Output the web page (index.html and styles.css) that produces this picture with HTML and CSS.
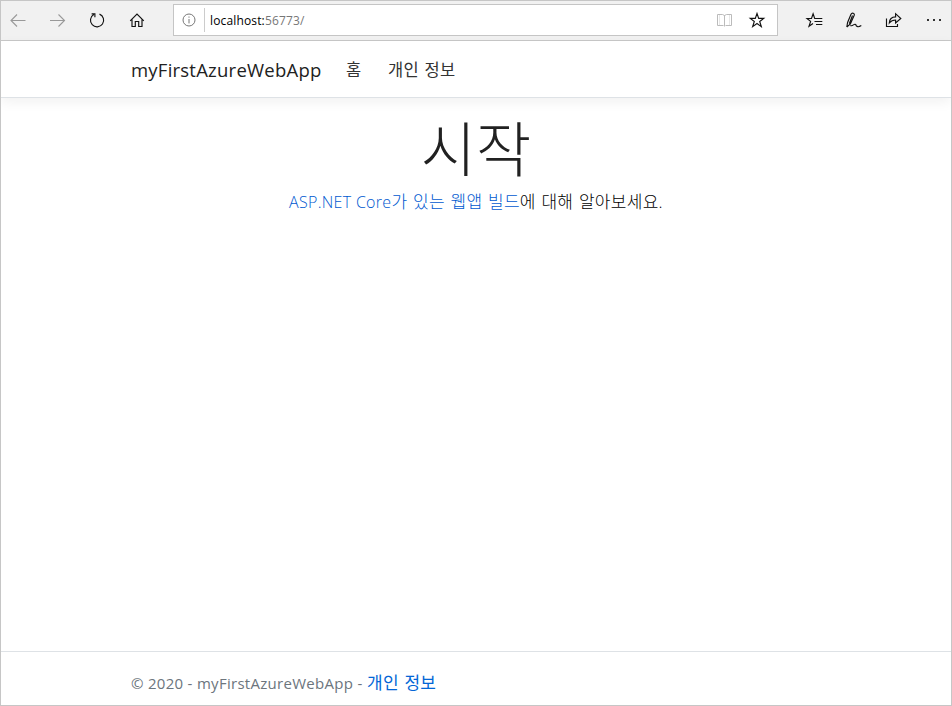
FILE: index.html
```html
<!DOCTYPE html>
<html lang="ko">
<head>
<meta charset="utf-8">
<title>myFirstAzureWebApp</title>
<link rel="stylesheet" href="styles.css">
</head>
<body>
<div class="window">
  <div class="toolbar">
    <div class="nav-buttons">
      <svg class="icon dim" viewBox="0 0 20 20"><path d="M18.5 10.5H4M10 4.5L4 10.5L10 16.5"/></svg>
      <svg class="icon dim" viewBox="0 0 20 20"><path d="M3 10.5H17.5M11.5 4.5L17.5 10.5L11.5 16.5"/></svg>
      <svg class="icon" viewBox="0 0 20 20"><path class="bold" d="M12.5 4.1A6.6 6.6 0 1 1 6.8 4.5M4.6 3.8H7.9V7.2"/></svg>
      <svg class="icon" viewBox="0 0 20 20"><path class="bold" d="M3.2 10.9L10 4L16.8 10.9M5 9.5V16.5H8.3V11.5H11.7V16.5H15V9.5"/></svg>
    </div>
    <div class="address">
      <svg class="info" viewBox="0 0 14 14"><circle cx="7" cy="7" r="6"/><path d="M7 6V10.4M7 3.5V4.7"/></svg>
      <span class="divider"></span>
      <span class="url">localhost:<span class="port">56773/</span></span>
      <svg class="icon book" viewBox="0 0 20 20"><path d="M10.5 5V16.5M9.5 15.5H3.5V4.5H8.5L10.5 5.5L12.5 4.5H17.5V15.5H11.5"/><path d="M5.5 4.5V15M15.5 4.5V15" opacity=".35"/></svg>
      <svg class="icon star" viewBox="0 0 20 20"><path class="bold" d="M10 3.5L11.7 8.4H16.7L12.7 11.5L14.3 16.6L10 13.5L5.7 16.6L7.3 11.5L3.3 8.4H8.3Z"/></svg>
    </div>
    <div class="tools">
      <svg class="icon" viewBox="0 0 20 20"><path class="bold" d="M12.8 8.5H10.7L9.1 3.8L7.5 8.5H3L6.6 11.4L5 16.3L9 13.5M11.5 8.5H18.3M10.5 11.5H18.3M12 14.5H18.3"/></svg>
      <svg class="icon" viewBox="0 0 20 20"><path class="bold" d="M2.8 17L3.6 12.5L7 4.3C8 2.2 11 3.2 10.2 5.3L6.4 14L2.8 17M8.5 5.5L5.3 13.7M6.3 15.5C8.9 17 9.9 13 11.7 14.5C12.3 17.1 14.5 17.3 17.3 15.6"/></svg>
      <svg class="icon" viewBox="0 0 20 20"><path class="bold" d="M2.5 8.5V16.5H13.5V14M5.3 13C5.5 9 7.8 6.8 11.6 6.8V3.7L16.8 8.5L11.6 12.9V10C8.6 10 6.9 11 5.3 13Z"/></svg>
      <svg class="icon dots" viewBox="0 0 20 20"><path d="M3 9h2v2H3zM9 9h2v2H9zM15 9h2v2h-2z"/></svg>
    </div>
  </div>
  <header class="navbar">
    <a class="brand">myFirstAzureWebApp</a>
    <a class="link home">홈</a>
    <a class="link">개인 정보</a>
  </header>
  <main class="content">
    <h1>시작</h1>
    <p><a><span class="latin">ASP.NET Core</span>가 있는 웹앱 빌드</a>에 대해 알아보세요.</p>
  </main>
  <footer class="footer"><span class="copyright">© 2020 - myFirstAzureWebApp -</span><a>개인 정보</a></footer>
</div>
</body>
</html>
```
FILE: styles.css
```css
* { box-sizing: border-box; }
body {
  margin: 0;
  background: #fff;
  color: #212529;
  font-family: "Open Sans", "Noto Sans CJK KR", sans-serif;
}
.window {
  width: 952px;
  height: 706px;
  border: 1px solid #c6c6c6;
  display: flex;
  flex-direction: column;
  overflow: hidden;
}
.toolbar {
  flex: 0 0 40px;
  display: flex;
  align-items: center;
  padding-bottom: 2px;
  background: #f1f1f1;
  border-bottom: 1px solid #c8c8c8;
}
.icon {
  width: 20px;
  height: 20px;
  flex: none;
  fill: none;
  stroke: #111;
  stroke-width: 1;
}
.icon .bold { stroke-width: 1.15; }
.dim { stroke: #999; stroke-width: 1.1; }
.dots { fill: #333; stroke: none; }
.nav-buttons { display: flex; gap: 20px; padding-left: 6px; width: 172px; }
.address {
  display: flex;
  align-items: center;
  width: 605px;
  height: 32px;
  padding-left: 8px;
  background: #fff;
  border: 1px solid #c5c5c5;
}
.info { width: 14px; height: 14px; fill: none; stroke: #777; stroke-width: 1; }
.divider { width: 1px; height: 24px; margin: 0 5px 0 8px; background: #ccc; }
.url { flex: 1; padding-top: 2px; font-size: 12px; line-height: 20px; letter-spacing: .15px; color: #000; }
.port { color: #777; }
.book { stroke: #bbb; margin-right: 13px; }
.star { margin-right: 10px; }
.tools { display: flex; gap: 20px; margin-left: 26px; }
.navbar {
  flex: 0 0 57px;
  display: flex;
  align-items: center;
  padding-left: 130px;
  border-bottom: 1px solid #dee2e6;
  box-shadow: 0 4px 12px rgba(0, 0, 0, .06);
}
.brand { font-size: 18.5px; width: 215px; letter-spacing: .23px; color: #212121; }
.link { font-size: 16.5px; color: #333; letter-spacing: .3px; word-spacing: 1px; }
.home { width: 42px; }
.content { flex: 1; text-align: center; padding-top: 10px; }
h1 {
  margin: 0;
  font-size: 60px;
  line-height: 83px;
  font-weight: 300;
  color: #212121;
}
p {
  margin: -1px 0 0;
  font-size: 17px;
  line-height: 24px;
  letter-spacing: .3px;
  word-spacing: .9px;
  color: #000;
  font-weight: 300;
}
.latin { font-size: 16px; letter-spacing: .3px; word-spacing: 0; }
p a, .footer a { color: #0366d6; }
p a { color: #0059d0; }
.footer {
  flex: 0 0 54px;
  display: flex;
  align-items: center;
  padding: 8px 0 0 130px;
  border-top: 1px solid #dee2e6;
  font-size: 15px;
}
.copyright { color: #6c757d; width: 236px; letter-spacing: .29px; white-space: nowrap; }
.footer a { font-size: 17px; line-height: 22px; letter-spacing: .3px; word-spacing: .8px; }
```
